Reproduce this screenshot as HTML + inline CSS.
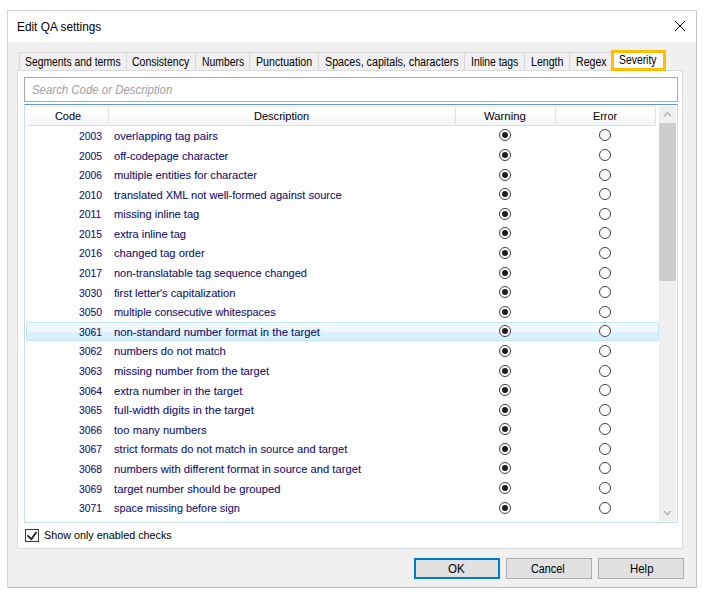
<!DOCTYPE html>
<html><head><meta charset="utf-8">
<style>
html,body{margin:0;padding:0;background:#fff;width:703px;height:593px;overflow:hidden;position:relative}
*{box-sizing:border-box}
.t{position:absolute;white-space:nowrap;font-family:"Liberation Sans", sans-serif;transform-origin:0 0}
.abs{position:absolute}
.win{position:absolute;left:7px;top:10px;width:690px;height:578px;border:1px solid #d3d3d3;border-right-color:#c6c6c6;border-bottom-color:#bebebe;background:#f0f0f0}
.title{position:absolute;left:8px;top:11px;width:688px;height:31px;background:#fff}
.tab{position:absolute;top:52px;height:19px;border:1px solid #d9d9d9;border-bottom:none;background:#f0f0f0}
.panel{position:absolute;left:17px;top:70px;width:666px;height:479px;border:1px solid #d9d9d9;background:#fff}
.search{position:absolute;left:24px;top:77px;width:654px;height:25px;border:1px solid #a9a9b0;background:#fff}
.table{position:absolute;left:24px;top:104px;width:654px;height:419px;border:1px solid #c3dff1;border-top-color:#6299cc;background:#fff}
.hdr{position:absolute;left:28px;top:106px;width:628px;height:20px;background:linear-gradient(#fff 0,#fcfcfc 45%,#f6f7f8 75%,#f3f4f6 100%);border-top:1px solid #eeeeee;border-bottom:1px solid #dcdcdc}
.sep{position:absolute;top:107px;width:1px;height:18px;background:#e2e2e2}
.radio{position:absolute;width:12px;height:12px;border:1px solid #404040;border-radius:50%;background:#fff}
.radio.on::after{content:"";position:absolute;left:2px;top:2px;width:6px;height:6px;border-radius:50%;background:#1e1e1e}
.sb{position:absolute;left:659px;top:106px;width:17px;height:415px;background:#f0f0f0}
.thumb{position:absolute;left:659px;top:123px;width:17px;height:158px;background:#cdcdcd}
.sel{position:absolute;left:26px;top:322px;width:633px;height:19px;border:1px solid #c3e7f8;border-radius:2px;background:linear-gradient(#f5fbfe 0,#ebf8fe 50%,#dbf2fd 50%,#d5effc 100%)}
.btn{position:absolute;top:558px;width:86px;height:21px;border:1px solid #adadad;background:#e1e1e1}
.chk{position:absolute;left:25px;top:529px;width:14px;height:13px;border:1px solid #3c3c3c;background:#fff}
</style></head><body>
<div class="win"></div>
<div class="title"></div>
<svg class="abs" style="left:674px;top:20px" width="12" height="12" viewBox="0 0 12 12"><path d="M1 1L11 11M11 1L1 11" stroke="#000" stroke-width="1" fill="none"/></svg>
<div class="tab" style="left:19px;width:108px"></div>
<div class="tab" style="left:126px;width:70px"></div>
<div class="tab" style="left:195px;width:55px"></div>
<div class="tab" style="left:249px;width:70px"></div>
<div class="tab" style="left:318px;width:147px"></div>
<div class="tab" style="left:464px;width:61px"></div>
<div class="tab" style="left:524px;width:46px"></div>
<div class="tab" style="left:569px;width:43px"></div>
<div class="panel"></div>
<div class="abs" style="left:611px;top:50px;width:55px;height:21px;border:3px solid #ffbe00;background:#fff"></div>
<div class="search"></div>
<div class="table"></div>
<div class="hdr"></div>
<div class="sep" style="left:108px"></div>
<div class="sep" style="left:455px"></div>
<div class="sep" style="left:555px"></div>
<div class="sep" style="left:655px"></div>
<div class="sb"></div>
<div class="thumb"></div>
<svg class="abs" style="left:659px;top:106px" width="17" height="17" viewBox="0 0 17 17"><path d="M5.2 10.2L8.5 6.6L11.8 10.2" stroke="#a3a3a3" stroke-width="1.1" fill="none"/></svg>
<svg class="abs" style="left:659px;top:504px" width="17" height="17" viewBox="0 0 17 17"><path d="M5.2 7L8.4 10.7L11.6 7" stroke="#a3a3a3" stroke-width="1.1" fill="none"/></svg>
<div class="sel"></div>
<span class="t" style="left:78.60px;top:130.92px;font-size:11.5px;line-height:11.5px;color:#0e0e6e;transform:scaleX(0.9000);-webkit-text-stroke:0.08px #0e0e6e;">2003</span><span class="t" style="left:113.60px;top:130.92px;font-size:11.5px;line-height:11.5px;color:#0e0e6e;transform:scaleX(0.9722);-webkit-text-stroke:0.08px #0e0e6e;">overlapping tag pairs</span><div class="radio on" style="left:499px;top:129.45px"></div><div class="radio" style="left:599px;top:129.45px"></div><span class="t" style="left:78.60px;top:150.51px;font-size:11.5px;line-height:11.5px;color:#0e0e6e;transform:scaleX(0.9000);-webkit-text-stroke:0.08px #0e0e6e;">2005</span><span class="t" style="left:113.60px;top:150.51px;font-size:11.5px;line-height:11.5px;color:#0e0e6e;transform:scaleX(0.9681);-webkit-text-stroke:0.08px #0e0e6e;">off-codepage character</span><div class="radio on" style="left:499px;top:149.04px"></div><div class="radio" style="left:599px;top:149.04px"></div><span class="t" style="left:78.60px;top:170.10px;font-size:11.5px;line-height:11.5px;color:#0e0e6e;transform:scaleX(0.9000);-webkit-text-stroke:0.08px #0e0e6e;">2006</span><span class="t" style="left:113.60px;top:170.10px;font-size:11.5px;line-height:11.5px;color:#0e0e6e;transform:scaleX(0.9720);-webkit-text-stroke:0.08px #0e0e6e;">multiple entities for character</span><div class="radio on" style="left:499px;top:168.63px"></div><div class="radio" style="left:599px;top:168.63px"></div><span class="t" style="left:78.60px;top:189.69px;font-size:11.5px;line-height:11.5px;color:#0e0e6e;transform:scaleX(0.9000);-webkit-text-stroke:0.08px #0e0e6e;">2010</span><span class="t" style="left:113.60px;top:189.69px;font-size:11.5px;line-height:11.5px;color:#0e0e6e;transform:scaleX(0.9619);-webkit-text-stroke:0.08px #0e0e6e;">translated XML not well-formed against source</span><div class="radio on" style="left:499px;top:188.22px"></div><div class="radio" style="left:599px;top:188.22px"></div><span class="t" style="left:78.60px;top:209.28px;font-size:11.5px;line-height:11.5px;color:#0e0e6e;transform:scaleX(0.9000);-webkit-text-stroke:0.08px #0e0e6e;">2011</span><span class="t" style="left:113.60px;top:209.28px;font-size:11.5px;line-height:11.5px;color:#0e0e6e;transform:scaleX(0.9669);-webkit-text-stroke:0.08px #0e0e6e;">missing inline tag</span><div class="radio on" style="left:499px;top:207.81px"></div><div class="radio" style="left:599px;top:207.81px"></div><span class="t" style="left:78.60px;top:228.87px;font-size:11.5px;line-height:11.5px;color:#0e0e6e;transform:scaleX(0.9000);-webkit-text-stroke:0.08px #0e0e6e;">2015</span><span class="t" style="left:113.60px;top:228.87px;font-size:11.5px;line-height:11.5px;color:#0e0e6e;transform:scaleX(0.9626);-webkit-text-stroke:0.08px #0e0e6e;">extra inline tag</span><div class="radio on" style="left:499px;top:227.40px"></div><div class="radio" style="left:599px;top:227.40px"></div><span class="t" style="left:78.60px;top:248.46px;font-size:11.5px;line-height:11.5px;color:#0e0e6e;transform:scaleX(0.9000);-webkit-text-stroke:0.08px #0e0e6e;">2016</span><span class="t" style="left:113.60px;top:248.46px;font-size:11.5px;line-height:11.5px;color:#0e0e6e;transform:scaleX(0.9726);-webkit-text-stroke:0.08px #0e0e6e;">changed tag order</span><div class="radio on" style="left:499px;top:246.99px"></div><div class="radio" style="left:599px;top:246.99px"></div><span class="t" style="left:78.60px;top:268.05px;font-size:11.5px;line-height:11.5px;color:#0e0e6e;transform:scaleX(0.9000);-webkit-text-stroke:0.08px #0e0e6e;">2017</span><span class="t" style="left:113.60px;top:268.05px;font-size:11.5px;line-height:11.5px;color:#0e0e6e;transform:scaleX(0.9547);-webkit-text-stroke:0.08px #0e0e6e;">non-translatable tag sequence changed</span><div class="radio on" style="left:499px;top:266.58px"></div><div class="radio" style="left:599px;top:266.58px"></div><span class="t" style="left:78.60px;top:287.64px;font-size:11.5px;line-height:11.5px;color:#0e0e6e;transform:scaleX(0.9000);-webkit-text-stroke:0.08px #0e0e6e;">3030</span><span class="t" style="left:113.60px;top:287.64px;font-size:11.5px;line-height:11.5px;color:#0e0e6e;transform:scaleX(0.9718);-webkit-text-stroke:0.08px #0e0e6e;">first letter's capitalization</span><div class="radio on" style="left:499px;top:286.17px"></div><div class="radio" style="left:599px;top:286.17px"></div><span class="t" style="left:78.60px;top:307.23px;font-size:11.5px;line-height:11.5px;color:#0e0e6e;transform:scaleX(0.9000);-webkit-text-stroke:0.08px #0e0e6e;">3050</span><span class="t" style="left:113.60px;top:307.23px;font-size:11.5px;line-height:11.5px;color:#0e0e6e;transform:scaleX(0.9504);-webkit-text-stroke:0.08px #0e0e6e;">multiple consecutive whitespaces</span><div class="radio on" style="left:499px;top:305.76px"></div><div class="radio" style="left:599px;top:305.76px"></div><span class="t" style="left:78.60px;top:326.82px;font-size:11.5px;line-height:11.5px;color:#0e0e6e;transform:scaleX(0.9000);-webkit-text-stroke:0.08px #0e0e6e;">3061</span><span class="t" style="left:113.60px;top:326.82px;font-size:11.5px;line-height:11.5px;color:#0e0e6e;transform:scaleX(0.9824);-webkit-text-stroke:0.08px #0e0e6e;">non-standard number format in the target</span><div class="radio on" style="left:499px;top:325.35px"></div><div class="radio" style="left:599px;top:325.35px"></div><span class="t" style="left:78.60px;top:346.41px;font-size:11.5px;line-height:11.5px;color:#0e0e6e;transform:scaleX(0.9000);-webkit-text-stroke:0.08px #0e0e6e;">3062</span><span class="t" style="left:113.60px;top:346.41px;font-size:11.5px;line-height:11.5px;color:#0e0e6e;transform:scaleX(0.9762);-webkit-text-stroke:0.08px #0e0e6e;">numbers do not match</span><div class="radio on" style="left:499px;top:344.94px"></div><div class="radio" style="left:599px;top:344.94px"></div><span class="t" style="left:78.60px;top:366.00px;font-size:11.5px;line-height:11.5px;color:#0e0e6e;transform:scaleX(0.9000);-webkit-text-stroke:0.08px #0e0e6e;">3063</span><span class="t" style="left:113.60px;top:366.00px;font-size:11.5px;line-height:11.5px;color:#0e0e6e;transform:scaleX(0.9751);-webkit-text-stroke:0.08px #0e0e6e;">missing number from the target</span><div class="radio on" style="left:499px;top:364.53px"></div><div class="radio" style="left:599px;top:364.53px"></div><span class="t" style="left:78.60px;top:385.59px;font-size:11.5px;line-height:11.5px;color:#0e0e6e;transform:scaleX(0.9000);-webkit-text-stroke:0.08px #0e0e6e;">3064</span><span class="t" style="left:113.60px;top:385.59px;font-size:11.5px;line-height:11.5px;color:#0e0e6e;transform:scaleX(0.9743);-webkit-text-stroke:0.08px #0e0e6e;">extra number in the target</span><div class="radio on" style="left:499px;top:384.12px"></div><div class="radio" style="left:599px;top:384.12px"></div><span class="t" style="left:78.60px;top:405.18px;font-size:11.5px;line-height:11.5px;color:#0e0e6e;transform:scaleX(0.9000);-webkit-text-stroke:0.08px #0e0e6e;">3065</span><span class="t" style="left:113.60px;top:405.18px;font-size:11.5px;line-height:11.5px;color:#0e0e6e;transform:scaleX(1.0039);-webkit-text-stroke:0.08px #0e0e6e;">full-width digits in the target</span><div class="radio on" style="left:499px;top:403.71px"></div><div class="radio" style="left:599px;top:403.71px"></div><span class="t" style="left:78.60px;top:424.77px;font-size:11.5px;line-height:11.5px;color:#0e0e6e;transform:scaleX(0.9000);-webkit-text-stroke:0.08px #0e0e6e;">3066</span><span class="t" style="left:113.60px;top:424.77px;font-size:11.5px;line-height:11.5px;color:#0e0e6e;transform:scaleX(0.9711);-webkit-text-stroke:0.08px #0e0e6e;">too many numbers</span><div class="radio on" style="left:499px;top:423.30px"></div><div class="radio" style="left:599px;top:423.30px"></div><span class="t" style="left:78.60px;top:444.36px;font-size:11.5px;line-height:11.5px;color:#0e0e6e;transform:scaleX(0.9000);-webkit-text-stroke:0.08px #0e0e6e;">3067</span><span class="t" style="left:113.60px;top:444.36px;font-size:11.5px;line-height:11.5px;color:#0e0e6e;transform:scaleX(0.9707);-webkit-text-stroke:0.08px #0e0e6e;">strict formats do not match in source and target</span><div class="radio on" style="left:499px;top:442.89px"></div><div class="radio" style="left:599px;top:442.89px"></div><span class="t" style="left:78.60px;top:463.95px;font-size:11.5px;line-height:11.5px;color:#0e0e6e;transform:scaleX(0.9000);-webkit-text-stroke:0.08px #0e0e6e;">3068</span><span class="t" style="left:113.60px;top:463.95px;font-size:11.5px;line-height:11.5px;color:#0e0e6e;transform:scaleX(0.9741);-webkit-text-stroke:0.08px #0e0e6e;">numbers with different format in source and target</span><div class="radio on" style="left:499px;top:462.48px"></div><div class="radio" style="left:599px;top:462.48px"></div><span class="t" style="left:78.60px;top:483.54px;font-size:11.5px;line-height:11.5px;color:#0e0e6e;transform:scaleX(0.9000);-webkit-text-stroke:0.08px #0e0e6e;">3069</span><span class="t" style="left:113.60px;top:483.54px;font-size:11.5px;line-height:11.5px;color:#0e0e6e;transform:scaleX(0.9790);-webkit-text-stroke:0.08px #0e0e6e;">target number should be grouped</span><div class="radio on" style="left:499px;top:482.07px"></div><div class="radio" style="left:599px;top:482.07px"></div><span class="t" style="left:78.60px;top:503.13px;font-size:11.5px;line-height:11.5px;color:#0e0e6e;transform:scaleX(0.9000);-webkit-text-stroke:0.08px #0e0e6e;">3071</span><span class="t" style="left:113.60px;top:503.13px;font-size:11.5px;line-height:11.5px;color:#0e0e6e;transform:scaleX(0.9461);-webkit-text-stroke:0.08px #0e0e6e;">space missing before sign</span><div class="radio on" style="left:499px;top:501.66px"></div><div class="radio" style="left:599px;top:501.66px"></div>
<div class="chk"></div>
<svg class="abs" style="left:25px;top:529px" width="14" height="13" viewBox="0 0 14 13"><path d="M2.4 6.4L6.4 10.1L11.5 2.9" stroke="#222" stroke-width="1.8" fill="none"/></svg>
<div class="btn" style="left:414px;border:2px solid #0078d7"></div>
<div class="btn" style="left:506px"></div>
<div class="btn" style="left:598px"></div>
<span class="t" style="left:17.00px;top:20.74px;font-size:12px;line-height:12px;color:#000;transform:scaleX(0.9872);">Edit QA settings</span><span class="t" style="left:24.90px;top:56.24px;font-size:12px;line-height:12px;color:#000;transform:scaleX(0.8634);">Segments and terms</span><span class="t" style="left:132.30px;top:56.24px;font-size:12px;line-height:12px;color:#000;transform:scaleX(0.8750);">Consistency</span><span class="t" style="left:201.70px;top:56.24px;font-size:12px;line-height:12px;color:#000;transform:scaleX(0.8647);">Numbers</span><span class="t" style="left:256.20px;top:56.24px;font-size:12px;line-height:12px;color:#000;transform:scaleX(0.8850);">Punctuation</span><span class="t" style="left:324.60px;top:56.24px;font-size:12px;line-height:12px;color:#000;transform:scaleX(0.8909);">Spaces, capitals, characters</span><span class="t" style="left:471.20px;top:56.24px;font-size:12px;line-height:12px;color:#000;transform:scaleX(0.8647);">Inline tags</span><span class="t" style="left:530.90px;top:56.24px;font-size:12px;line-height:12px;color:#000;transform:scaleX(0.8828);">Length</span><span class="t" style="left:575.90px;top:56.24px;font-size:12px;line-height:12px;color:#000;transform:scaleX(0.8822);">Regex</span><span class="t" style="left:619.00px;top:53.94px;font-size:12px;line-height:12px;color:#000;transform:scaleX(0.8649);">Severity</span><span class="t" style="left:31.50px;top:84.34px;font-size:12px;line-height:12px;color:#a0a0a0;transform:scaleX(0.9518);font-style:italic;">Search Code or Description</span><span class="t" style="left:54.90px;top:111.17px;font-size:11.5px;line-height:11.5px;color:#000;transform:scaleX(0.9455);">Code</span><span class="t" style="left:254.00px;top:111.17px;font-size:11.5px;line-height:11.5px;color:#000;transform:scaleX(0.9595);">Description</span><span class="t" style="left:484.00px;top:111.17px;font-size:11.5px;line-height:11.5px;color:#000;transform:scaleX(0.9857);">Warning</span><span class="t" style="left:593.10px;top:111.17px;font-size:11.5px;line-height:11.5px;color:#000;transform:scaleX(0.9428);">Error</span><span class="t" style="left:43.80px;top:529.97px;font-size:11.5px;line-height:11.5px;color:#000;transform:scaleX(0.9378);">Show only enabled checks</span><span class="t" style="left:448.00px;top:563.24px;font-size:12px;line-height:12px;color:#000;transform:scaleX(0.9629);">OK</span><span class="t" style="left:531.00px;top:563.24px;font-size:12px;line-height:12px;color:#000;transform:scaleX(0.9020);">Cancel</span><span class="t" style="left:630.00px;top:563.24px;font-size:12px;line-height:12px;color:#000;transform:scaleX(0.9519);">Help</span>
</body></html>
